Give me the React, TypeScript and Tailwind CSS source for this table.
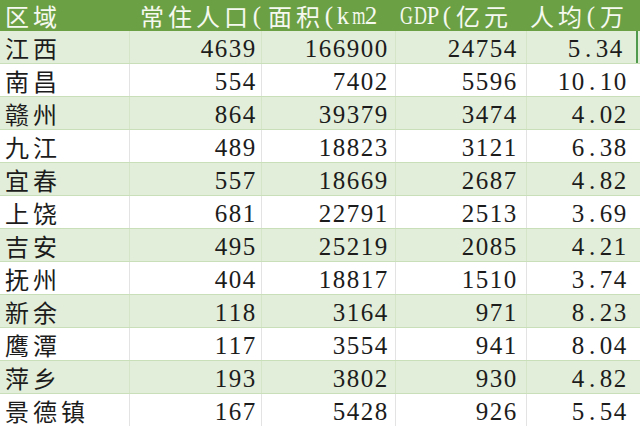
import React from 'react';

const rows: string[][] = [
  ['江西', '4639', '166900', '24754', '5.34'],
  ['南昌', '554', '7402', '5596', '10.10'],
  ['赣州', '864', '39379', '3474', '4.02'],
  ['九江', '489', '18823', '3121', '6.38'],
  ['宜春', '557', '18669', '2687', '4.82'],
  ['上饶', '681', '22791', '2513', '3.69'],
  ['吉安', '495', '25219', '2085', '4.21'],
  ['抚州', '404', '18817', '1510', '3.74'],
  ['新余', '118', '3164', '971', '8.23'],
  ['鹰潭', '117', '3554', '941', '8.04'],
  ['萍乡', '193', '3802', '930', '4.82'],
  ['景德镇', '167', '5428', '926', '5.54'],
];

const isCjk = (c: string) => /[\u3000-\u9fff\uff00-\uffef]/.test(c);

// wide latin letters squeezed into the half-width cell
const squeeze: Record<string, string> = {
  m: 'scale-x-[0.68]',
  G: 'scale-x-[0.72]',
  D: 'scale-x-[0.72]',
  P: 'scale-x-[0.9]',
};

// SimSun-like fixed pitch: ideographs are 28px wide, everything else 14px
function Mono({ text }: { text: string }) {
  return (
    <span className="inline-flex whitespace-nowrap">
      {text.split('').map((c, i) =>
        isCjk(c) ? (
          <span
            key={i}
            className="inline-block w-[28px] -my-[6px] text-center text-[24px] leading-[36px] font-['Noto_Sans_CJK_SC',sans-serif]"
          >
            {c}
          </span>
        ) : (
          <span
            key={i}
            className={`inline-block w-[14px] -my-[2px] text-center text-[25px] leading-[28px] font-['Liberation_Serif',serif] ${
              squeeze[c] ?? ''
            }`}
          >
            {c}
          </span>
        )
      )}
    </span>
  );
}

const pads = ['pr-[5px]', 'pr-[7px]', 'pr-[9px]', 'pr-[13px]'];

export default function App() {
  return (
    <div className="w-[640px] h-[426px] overflow-hidden bg-white text-[#1c1c1c]">
      {/* header */}
      <div className="grid grid-cols-[130px_132px_134px_131px_113px] h-[31px] bg-[#6ca045] text-[#f5f9ef]">
        <div className="flex items-end pb-[3px] pl-[3px]">
          <Mono text="区域" />
        </div>
        <div className="flex items-end pb-[3px] pl-[8px]">
          <Mono text="常住人口(" />
        </div>
        <div className="flex items-end pb-[3px] pl-[4px]">
          <Mono text="面积(km2" />
        </div>
        <div className="flex items-end pb-[3px] pl-[2px]">
          <Mono text="GDP(亿元" />
        </div>
        <div className="flex items-end pb-[3px] pl-[1px] overflow-hidden">
          <Mono text="人均(万" />
        </div>
      </div>

      {rows.map((r, ri) => {
        const green = ri % 2 === 0;
        return (
          <div
            key={ri}
            className={`grid grid-cols-[130px_132px_134px_131px_113px] h-[33px] border-b border-[#c9dfb9] ${
              green ? 'bg-[#e2eed9]' : 'bg-white'
            }`}
          >
            <div
              className={`flex items-end pb-[3px] pl-[3px] border-r ${
                green ? 'border-[#d4e5c8]' : 'border-[#e3e3e3]'
              }`}
            >
              <Mono text={r[0]} />
            </div>
            {r.slice(1).map((v, ci) => (
              <div
                key={ci}
                className={`flex items-end justify-end pb-[2px] ${pads[ci]} ${
                  ci < 3 ? (green ? 'border-r border-[#d4e5c8]' : 'border-r border-[#e3e3e3]') : ''
                } ${ri === 0 && ci === 3 ? 'mr-[2px] border-r-2 border-r-[#4f9a4c]' : ''}`}
              >
                <Mono text={v} />
              </div>
            ))}
          </div>
        );
      })}
    </div>
  );
}
